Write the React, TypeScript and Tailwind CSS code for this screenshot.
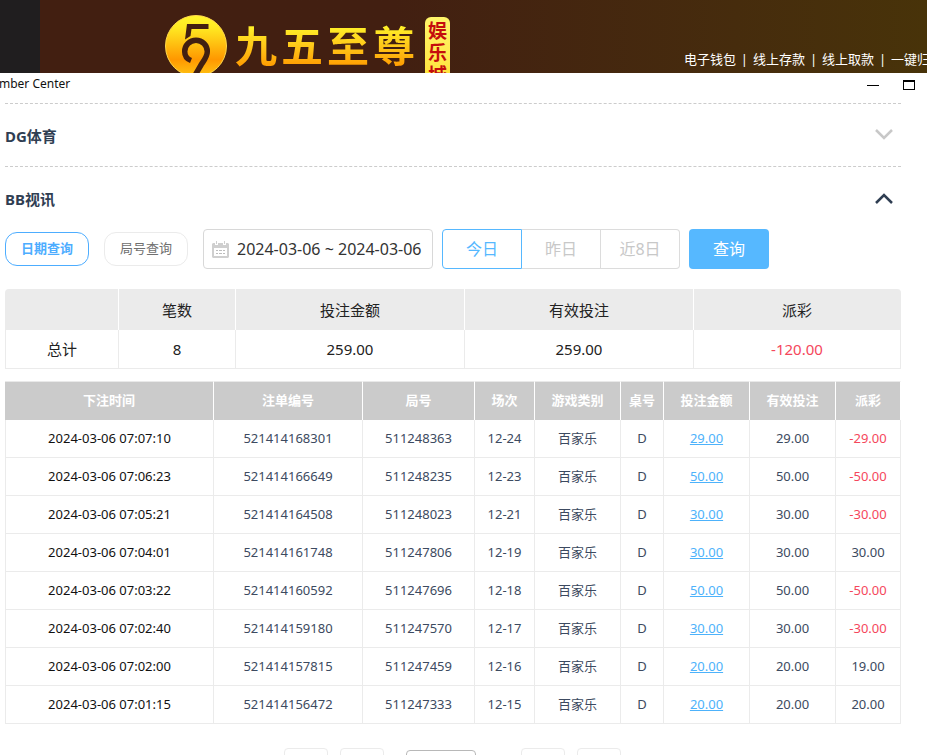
import clsx from 'clsx';

const navLinks = ['电子钱包', '线上存款', '线上取款', '一键归户'];

const summaryHeads = ['', '笔数', '投注金额', '有效投注', '派彩'];
const summaryRow = ['总计', '8', '259.00', '259.00', '-120.00'];

const betHeads = ['下注时间', '注单编号', '局号', '场次', '游戏类别', '桌号', '投注金额', '有效投注', '派彩'];

const bets = [
  { time: '2024-03-06 07:07:10', id: '521414168301', round: '511248363', shoe: '12-24', amount: '29.00', payout: '-29.00' },
  { time: '2024-03-06 07:06:23', id: '521414166649', round: '511248235', shoe: '12-23', amount: '50.00', payout: '-50.00' },
  { time: '2024-03-06 07:05:21', id: '521414164508', round: '511248023', shoe: '12-21', amount: '30.00', payout: '-30.00' },
  { time: '2024-03-06 07:04:01', id: '521414161748', round: '511247806', shoe: '12-19', amount: '30.00', payout: '30.00' },
  { time: '2024-03-06 07:03:22', id: '521414160592', round: '511247696', shoe: '12-18', amount: '50.00', payout: '-50.00' },
  { time: '2024-03-06 07:02:40', id: '521414159180', round: '511247570', shoe: '12-17', amount: '30.00', payout: '-30.00' },
  { time: '2024-03-06 07:02:00', id: '521414157815', round: '511247459', shoe: '12-16', amount: '20.00', payout: '19.00' },
  { time: '2024-03-06 07:01:15', id: '521414156472', round: '511247333', shoe: '12-15', amount: '20.00', payout: '20.00' },
];

const payoutColor = (value: string) => (value.startsWith('-') ? 'text-[#f5475c]' : '');

const Emblem = () => (
  <svg className="h-[62px] w-[62px] shrink-0" viewBox="0 0 62 62" aria-hidden="true">
    <defs>
      <linearGradient id="gold" x1="0" y1="0" x2="0" y2="1">
        <stop offset="0" stopColor="#fff82c" />
        <stop offset="0.2" stopColor="#ffe922" />
        <stop offset="0.72" stopColor="#ff9800" />
        <stop offset="1" stopColor="#ffc414" />
      </linearGradient>
    </defs>
    <circle cx="31" cy="31" r="30.5" fill="url(#gold)" stroke="#ffd84a" />
    <path d="M22 9h21.500v5H26.500l-1 7-5.500 3.500z" fill="#421f11" />
    <path
      d="M26 45.500C22 44 19.700 40.500 19.700 36.500a11.300 11.300 0 0 1 22.600 0c0 5-3 8.500-6 13L28.500 63"
      fill="none"
      stroke="#421f11"
      strokeWidth="5.5"
    />
  </svg>
);

const CalendarIcon = () => (
  <svg className="h-[17px] w-[17px] shrink-0" viewBox="0 0 17 17" aria-hidden="true">
    <path
      d="M1 2h2v2h3V2h5v2h3V2h2l1 1v13l-1 1H1l-1-1V3zM2 7v8h13V7z"
      fill="#cfcfcf"
      fillRule="evenodd"
    />
    <path d="M4 0h1v3H4zM12 0h1v3h-1z" fill="#cfcfcf" />
    <path d="M4 9h2v1H4zM7 9h3v1H7zM11 9h2v1h-2zM4 12h2v1H4zM7 12h3v1H7zM11 12h2v1h-2z" fill="#bdbdbd" />
  </svg>
);

const Chevron = ({ open = false }: { open?: boolean }) => (
  <svg className="mb-0.5 h-3 w-[18px]" viewBox="0 0 18 12" fill="none" aria-hidden="true">
    {open ? (
      <path d="M1 11 9 3l8 8" stroke="#2f3e52" strokeWidth="2.5" />
    ) : (
      <path d="M1 1l8 8 8-8" stroke="#c8c8c8" strokeWidth="2.5" />
    )}
  </svg>
);

const SiteHeader = () => (
  <header className="flex h-[73px] shrink-0 overflow-hidden bg-[#201e1f]">
    <div className="ml-10 flex min-w-0 flex-1 items-start bg-linear-to-r from-[#421f11] from-40% to-[#483309] pl-[125px]">
      <div className="flex shrink-0 items-start">
        <div className="pt-[15px]">
          <Emblem />
        </div>
        <div className="ml-2 flex gap-1 pt-[25px] text-[42px] leading-[42px] font-bold">
          {['九', '五', '至', '尊'].map((char) => (
            <span key={char} className="bg-linear-to-b from-[#fff42a] to-[#ff9a00] bg-clip-text text-transparent">
              {char}
            </span>
          ))}
        </div>
        <div className="mt-[17px] ml-[10px] flex w-[25px] flex-col items-center rounded-md bg-linear-to-b from-[#fff66a] to-[#ffe030] pt-[3px] text-[19px] leading-[22px] font-bold text-[#c40d0d]">
          <span>娱</span>
          <span>乐</span>
          <span>城</span>
        </div>
      </div>
      <nav className="-mr-4 ml-auto flex shrink-0 pt-[49px] text-[13px] leading-5 text-white">
        {navLinks.map((label, i) => (
          <div key={label} className="flex">
            {i > 0 && <span className="w-[17px] text-center">|</span>}
            <a href="#">{label}</a>
          </div>
        ))}
      </nav>
    </div>
  </header>
);

const Filters = () => (
  <form className="flex items-center" onSubmit={(e) => e.preventDefault()}>
    <button type="button" className="h-[34px] w-[84px] rounded-xl border border-[#4dadff] text-[13px] font-bold text-[#4dadff]">
      日期查询
    </button>
    <button type="button" className="ml-[15px] h-[34px] w-[84px] rounded-xl border border-[#ebebeb] text-[13px] text-[#707070]">
      局号查询
    </button>
    <label className="ml-[15px] flex h-10 w-[230px] items-center gap-2 rounded border border-[#d8d8d8] pl-2">
      <CalendarIcon />
      <input
        type="text"
        aria-label="日期"
        defaultValue="2024-03-06 ~ 2024-03-06"
        className="w-full min-w-0 bg-transparent text-base text-[#333] outline-none"
      />
    </label>
    <div className="ml-[9px] flex h-10 text-base text-[#c8c8c8]">
      <button type="button" className="w-20 rounded-l border border-[#56b8ff] text-[#56b8ff]">今日</button>
      <button type="button" className="w-[79px] border-y border-r border-[#dcdcdc]">昨日</button>
      <button type="button" className="w-[79px] rounded-r border-y border-r border-[#dcdcdc]">近8日</button>
    </div>
    <button type="submit" className="ml-[9px] h-10 w-20 rounded bg-[#56b8ff] text-base text-white">查询</button>
  </form>
);

const SummaryTable = () => (
  <table className="mt-5 w-full table-fixed border-separate border-spacing-0 text-center text-[15px] leading-5 text-[#222]">
    <colgroup>
      <col className="w-[114px]" />
      <col className="w-[117px]" />
      <col className="w-[229px]" />
      <col className="w-[229px]" />
      <col className="w-[207px]" />
    </colgroup>
    <thead>
      <tr>
        {summaryHeads.map((head) => (
          <th
            key={head}
            className="h-[41px] border-r border-white bg-[#ebebeb] font-normal first:rounded-tl last:rounded-tr last:border-[#ebebeb]"
          >
            {head}
          </th>
        ))}
      </tr>
    </thead>
    <tbody>
      <tr>
        {summaryRow.map((value, i) => (
          <td key={i} className={clsx('h-[39px] border-r border-b border-[#ebebeb] first:border-l', payoutColor(value))}>
            {value}
          </td>
        ))}
      </tr>
    </tbody>
  </table>
);

const BetTable = () => (
  <table className="mt-3 w-full table-fixed border-separate border-spacing-0 text-center text-[13px] leading-5 text-[#3c4a60]">
    <colgroup>
      <col className="w-[209px]" />
      <col className="w-[149px]" />
      <col className="w-[112px]" />
      <col className="w-[60px]" />
      <col className="w-[86px]" />
      <col className="w-[43px]" />
      <col className="w-[86px]" />
      <col className="w-[86px]" />
      <col className="w-[65px]" />
    </colgroup>
    <thead>
      <tr>
        {betHeads.map((head) => (
          <th key={head} className="h-[39px] border-t border-r border-t-[#e9e9e9] border-r-white bg-[#cbcbcb] pb-0.5 font-bold text-white">
            {head}
          </th>
        ))}
      </tr>
    </thead>
    <tbody>
      {bets.map((bet) => (
        <tr key={bet.id} className="*:h-[38px] *:border-r *:border-b *:border-[#ebebeb] *:pb-0.5">
          <td className="border-l text-[#111]">{bet.time}</td>
          <td>{bet.id}</td>
          <td>{bet.round}</td>
          <td>{bet.shoe}</td>
          <td>百家乐</td>
          <td>D</td>
          <td>
            <a href="#" className="text-[#4db2fb] underline">{bet.amount}</a>
          </td>
          <td>{bet.amount}</td>
          <td className={payoutColor(bet.payout)}>{bet.payout}</td>
        </tr>
      ))}
    </tbody>
  </table>
);

const Pager = () => (
  <div className="mt-6 flex items-start justify-center pr-0.5">
    <button type="button" aria-label="第一页" className="h-9 w-11 rounded border border-[#ebebeb]" />
    <button type="button" aria-label="上一页" className="ml-3 h-9 w-11 rounded border border-[#ebebeb]" />
    <select aria-label="页码" className="mt-0.5 ml-[22px] h-8 w-[70px] appearance-none rounded border border-[#b8b8b8]" />
    <button type="button" aria-label="下一页" className="ml-[45px] h-9 w-11 rounded border border-[#ebebeb]" />
    <button type="button" aria-label="最后一页" className="ml-3 h-9 w-11 rounded border border-[#ebebeb]" />
  </div>
);

const App = () => (
  <div className="flex h-screen flex-col overflow-hidden bg-white font-['Noto_Sans','Noto_Sans_CJK_SC',sans-serif]">
    <SiteHeader />
    <div className="flex h-[30px] shrink-0 items-start justify-between pt-[3px] pr-3">
      <span className="-ml-px text-xs leading-4 text-[#111]">mber Center</span>
      <div className="flex gap-6 pt-[3px]">
        <button type="button" aria-label="最小化" className="flex h-3 w-3 items-center">
          <span className="h-px w-3 bg-black" />
        </button>
        <button type="button" aria-label="最大化" className="mt-px h-[10px] w-3 border border-t-2 border-black" />
      </div>
    </div>
    <main className="min-h-0 flex-1 overflow-hidden pr-[26px] pl-[5px]">
      <section className="border-t border-dashed border-[#ccc]">
        <h2 className="flex h-[62px] items-center justify-between pt-0.5 pr-2 text-[15px] font-bold text-[#2f3e52]">
          DG体育
          <Chevron />
        </h2>
      </section>
      <section className="border-t border-dashed border-[#ccc]">
        <h2 className="flex h-[62px] items-center justify-between pt-0.5 pr-2 text-[15px] font-bold text-[#2f3e52]">
          BB视讯
          <Chevron open />
        </h2>
        <Filters />
        <SummaryTable />
        <BetTable />
        <Pager />
      </section>
    </main>
  </div>
);

export default App;
